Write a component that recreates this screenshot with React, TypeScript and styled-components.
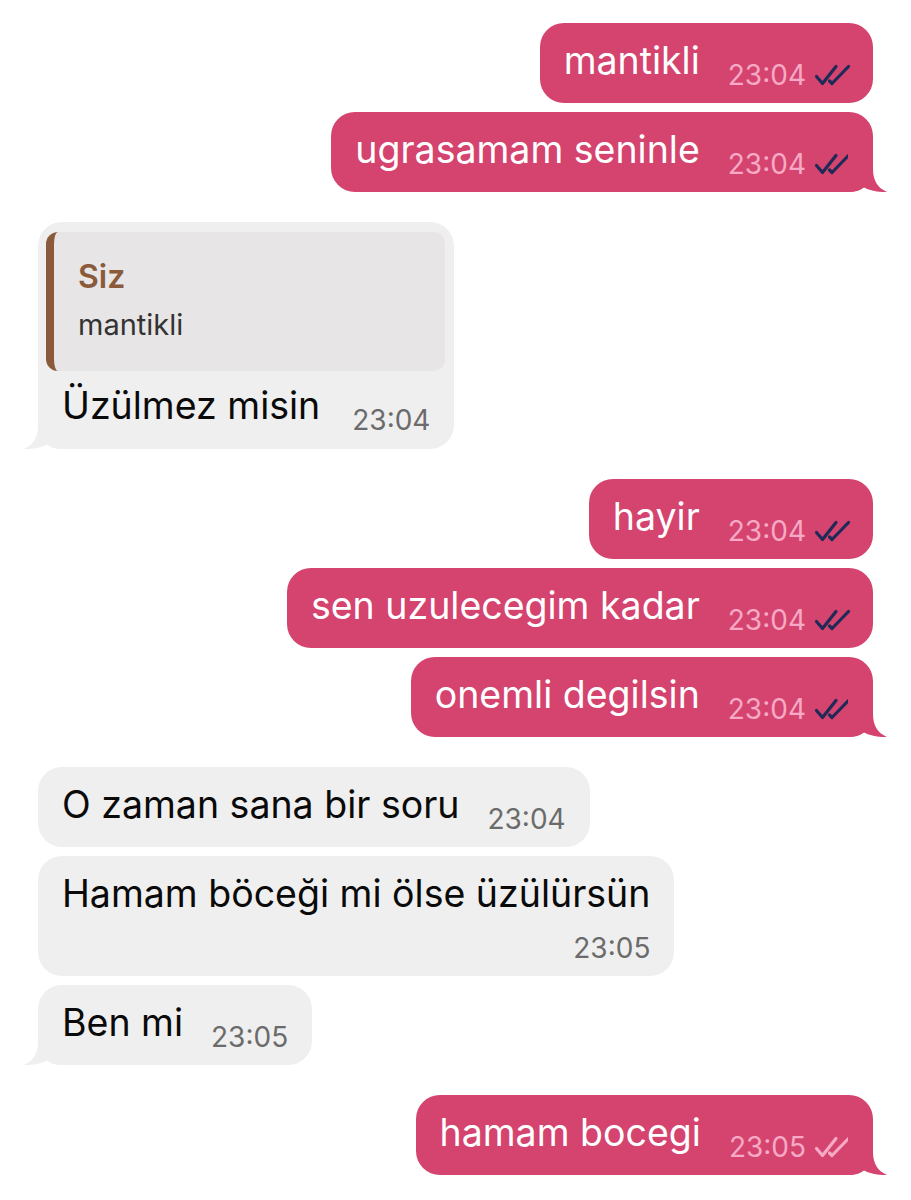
import React from 'react';
import styled, { createGlobalStyle, css } from 'styled-components';

const Global = createGlobalStyle`
  html, body { margin: 0; padding: 0; background: #ffffff; }
  body { font-family: Inter, "Noto Sans", sans-serif; -webkit-font-smoothing: antialiased; }
`;

const OUT_BG = '#D5436F';
const IN_BG = '#EFEFEF';

const Page = styled.main`
  width: 911px;
  box-sizing: border-box;
  padding: 23px 38px 20px;
  display: flex;
  flex-direction: column;
  gap: 30px;
`;

const Group = styled.section<{ $out: boolean }>`
  display: flex;
  flex-direction: column;
  gap: 9px;
  align-items: ${(p) => (p.$out ? 'flex-end' : 'flex-start')};
`;

const Bubble = styled.div<{ $out: boolean }>`
  position: relative;
  display: flex;
  flex-direction: column;
  border-radius: 24px;
  background: ${(p) => (p.$out ? OUT_BG : IN_BG)};
`;

const Row = styled.div<{ $out: boolean; $stack: boolean; $quoted: boolean }>`
  display: flex;
  align-items: flex-end;
  gap: ${(p) => (p.$quoted ? '32px' : '28px')};
  padding: ${(p) => (p.$quoted ? '13px' : '16px')} ${(p) => (p.$out ? '21px' : '24px')}
    ${(p) => (p.$quoted ? '14px' : '13px')} 24px;
  ${(p) =>
    p.$stack &&
    css`
      flex-direction: column;
      align-items: stretch;
      gap: 10px;
    `}
`;

const Text = styled.span<{ $out: boolean }>`
  font-size: 37.5px;
  line-height: 44px;
  margin-bottom: 7px;
  white-space: nowrap;
  color: ${(p) => (p.$out ? '#ffffff' : '#0a0a0a')};
`;

const Meta = styled.span<{ $out: boolean }>`
  display: inline-flex;
  align-items: center;
  align-self: flex-end;
  gap: 8px;
  flex-shrink: 0;
  font-size: 28px;
  line-height: 30px;
  color: ${(p) => (p.$out ? '#F6AAC5' : '#6B6B6B')};
`;

const Quote = styled.div`
  margin: 10px 9px 0 8px;
  background: #E7E5E6;
  border-left: 8px solid #8A5A3B;
  border-radius: 12px;
  padding: 26px 24px 29px 24px;
  display: flex;
  flex-direction: column;
  gap: 12px;
`;

const QuoteName = styled.span`
  font-size: 32px;
  line-height: 38px;
  font-weight: 600;
  color: #8A5A3B;
`;

const QuoteText = styled.span`
  font-size: 29px;
  line-height: 34px;
  color: #333333;
`;

const TailSvg = styled.svg<{ $out: boolean }>`
  position: absolute;
  bottom: 0;
  ${(p) =>
    p.$out
      ? css`
          right: -15px;
        `
      : css`
          left: -15px;
          transform: scaleX(-1);
        `}
`;

const Tail = ({ out }: { out: boolean }) => (
  <TailSvg $out={out} width="40" height="50" viewBox="0 0 40 50">
    <path
      d="M0 0 H25 V27 C25 39 30 46 39 50 C31 50.5 22 48.5 16 45.5 C12 48.5 7 50 0 50 Z"
      fill={out ? OUT_BG : IN_BG}
    />
  </TailSvg>
);

const Checks = ({ read }: { read: boolean }) => (
  <svg
    width="38"
    height="22"
    viewBox="0 0 38 22"
    fill="none"
    stroke={read ? '#1E2A57' : '#F6AAC5'}
    strokeWidth="3.2"
    strokeLinecap="round"
    strokeLinejoin="round"
  >
    <path d="M2.5 12.5 L8.5 19.5 L22 2.5" />
    <path d="M15.5 17 L18 19.5 L34.5 2.5" />
  </svg>
);

type Msg = {
  text: string;
  time: string;
  tail?: boolean;
  stack?: boolean;
  read?: boolean;
  quote?: { name: string; text: string };
};

type G = { out: boolean; msgs: Msg[] };

const groups: G[] = [
  {
    out: true,
    msgs: [
      { text: 'mantikli', time: '23:04', read: true },
      { text: 'ugrasamam seninle', time: '23:04', read: true, tail: true },
    ],
  },
  {
    out: false,
    msgs: [
      {
        text: 'Üzülmez misin',
        time: '23:04',
        tail: true,
        quote: { name: 'Siz', text: 'mantikli' },
      },
    ],
  },
  {
    out: true,
    msgs: [
      { text: 'hayir', time: '23:04', read: true },
      { text: 'sen uzulecegim kadar', time: '23:04', read: true },
      { text: 'onemli degilsin', time: '23:04', read: true, tail: true },
    ],
  },
  {
    out: false,
    msgs: [
      { text: 'O zaman sana bir soru', time: '23:04' },
      { text: 'Hamam böceği mi ölse üzülürsün', time: '23:05', stack: true },
      { text: 'Ben mi', time: '23:05', tail: true },
    ],
  },
  {
    out: true,
    msgs: [{ text: 'hamam bocegi', time: '23:05', read: false, tail: true }],
  },
];

export default function App() {
  return (
    <>
      <Global />
      <Page>
        {groups.map((g, gi) => (
          <Group key={gi} $out={g.out}>
            {g.msgs.map((m, mi) => (
              <Bubble key={mi} $out={g.out}>
                {m.tail && <Tail out={g.out} />}
                {m.quote && (
                  <Quote>
                    <QuoteName>{m.quote.name}</QuoteName>
                    <QuoteText>{m.quote.text}</QuoteText>
                  </Quote>
                )}
                <Row $out={g.out} $stack={!!m.stack} $quoted={!!m.quote}>
                  <Text $out={g.out}>{m.text}</Text>
                  <Meta $out={g.out}>
                    {m.time}
                    {g.out && <Checks read={!!m.read} />}
                  </Meta>
                </Row>
              </Bubble>
            ))}
          </Group>
        ))}
      </Page>
    </>
  );
}
